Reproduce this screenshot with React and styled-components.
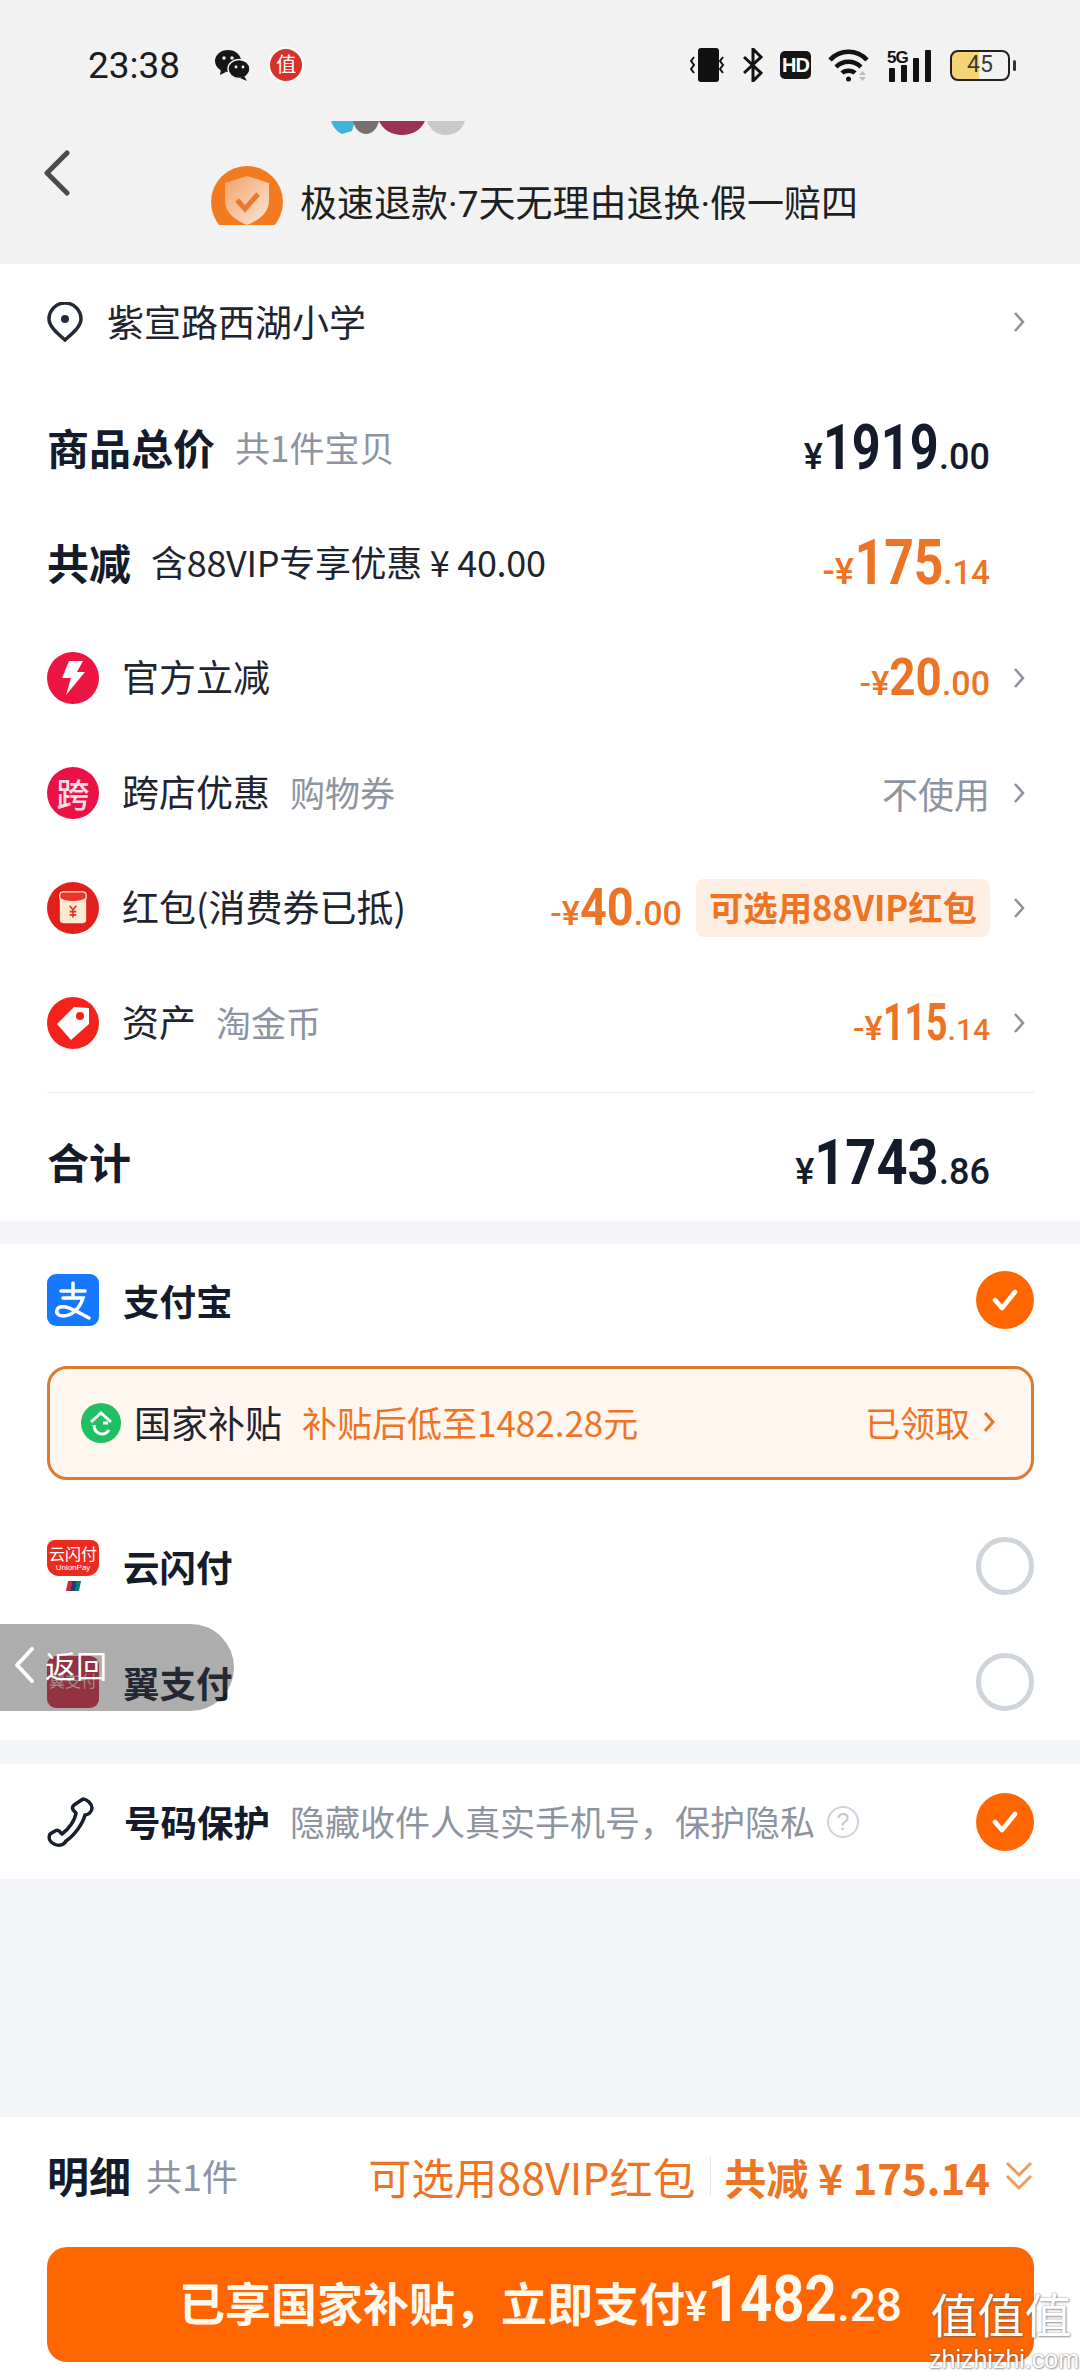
import styled, { createGlobalStyle } from "styled-components";

const cjk = `"Noto Sans CJK SC", "Noto Sans", sans-serif`;
const ink = "#141b2b";
const gray = "#8d949f";
const orange = "#ec7424";
const brand = "#ff6600";

const Global = createGlobalStyle`
  body {
    margin: 0;
    background: #f3f5f8;
    font-family: ${cjk};
    color: ${ink};
  }
`;

const Page = styled.div`
  position: relative;
  width: 1080px;
  height: 2376px;
  overflow: hidden;
  display: flex;
  flex-direction: column;
  background: #f3f5f8;
`;

const Header = styled.div`
  height: 264px;
  background: #f2f2f2;
`;

const StatusBar = styled.div`
  height: 98px;
  padding: 16px 64px 0 88px;
  display: flex;
  align-items: center;
`;

const Time = styled.span`
  font: 400 37px Roboto, sans-serif;
  color: #1c1c1c;
  margin-right: 35px;
`;

const Badge = styled.span`
  width: 32px;
  height: 32px;
  margin-left: 18px;
  border-radius: 50%;
  background: #d8302b;
  border: 2px solid #fff;
  color: #fff;
  font-size: 20px;
  line-height: 30px;
  text-align: center;
`;

const StatusIcons = styled.div`
  margin-left: auto;
  display: flex;
  align-items: center;
  gap: 17px;
`;

const HdMark = styled.span`
  width: 31px;
  height: 28px;
  border-radius: 5px;
  background: #151515;
  color: #fff;
  font: 700 20px/28px "Liberation Sans", sans-serif;
  text-align: center;
  letter-spacing: -1px;
`;

const Battery = styled.div`
  position: relative;
  width: 60px;
  height: 31px;
  box-sizing: border-box;
  border: 2.5px solid #222;
  border-radius: 8px;
  margin-right: 6px;
  background: linear-gradient(90deg, #f5d475 48%, transparent 48%);
  font: 400 23px/26px Roboto, sans-serif;
  color: #3a3a3a;
  text-align: center;
  &::after {
    content: "";
    position: absolute;
    right: -8px;
    top: 8px;
    width: 3px;
    height: 11px;
    background: #333;
    border-radius: 2px;
  }
`;

const AvatarStrip = styled.svg`
  display: block;
  margin: 7px 0 0 331px;
`;

const Nav = styled.div`
  display: flex;
  align-items: flex-start;
  padding-left: 44px;
`;

const BackIcon = styled.svg`
  flex: none;
  margin-top: 15px;
  fill: none;
  stroke: #4a4a4a;
  stroke-width: 5;
  stroke-linecap: round;
  stroke-linejoin: round;
`;

const TrustRow = styled.div`
  display: flex;
  align-items: flex-end;
  gap: 17px;
  margin: 31px 0 0 141px;
`;

const TrustText = styled.span`
  font-family: Roboto, ${cjk};
  font-size: 37px;
  line-height: 40px;
  color: #1f1f1f;
  white-space: nowrap;
`;

const Section = styled.section`
  background: #fff;
  margin-bottom: ${(p) => p.$gap || 0}px;
`;

const Row = styled.div`
  height: ${(p) => p.$h || 115}px;
  box-sizing: border-box;
  padding: ${(p) => p.$top || 0}px 55px ${(p) => p.$bottom || 0}px 47px;
  display: flex;
  align-items: center;
`;

const CheckRow = styled(Row)`
  padding-right: 46px;
`;

const Title = styled.span`
  font-size: 42px;
  font-weight: 700;
  padding-bottom: 3px;
  white-space: nowrap;
  color: ${ink};
`;

const Label = styled.span`
  font-size: 37px;
  padding-bottom: 3px;
  margin-left: ${(p) => p.$ml || 0}px;
  color: #1f2530;
  white-space: nowrap;
`;

const Sub = styled.span`
  font-size: ${(p) => p.$size || 35}px;
  padding-bottom: 3px;
  margin-left: ${(p) => p.$ml || 20}px;
  color: ${gray};
  white-space: nowrap;
`;

const Offer = styled(Label)`
  font-size: 36px;
  letter-spacing: -0.3px;
`;

const StrongLabel = styled.span`
  font-size: 36.5px;
  font-weight: 700;
  margin-left: 24px;
  color: ${ink};
  white-space: nowrap;
`;

const RoundIcon = styled.span`
  flex: none;
  width: 52px;
  height: 52px;
  margin-right: 23px;
  border-radius: 50%;
  background: ${(p) => p.$bg};
  color: #ffdce3;
  font-size: 33px;
  font-weight: 500;
  line-height: 48px;
  text-align: center;
  display: flex;
  align-items: center;
  justify-content: center;
`;

const Money = styled.div`
  margin-left: auto;
  margin-right: ${(p) => (p.$bare ? 35 : 0)}px;
  display: flex;
  align-items: baseline;
  color: ${(p) => p.$color || ink};
  font-family: Roboto, sans-serif;
  font-weight: 700;
  line-height: 1;
`;

const Small = styled.span`
  font-size: ${(p) => p.$size || 36}px;
  font-weight: 500;
`;

const Digits = styled.span`
  display: inline-block;
  font-size: ${(p) => p.$size}px;
  transform: scaleX(${(p) => p.$sx});
  transform-origin: right;
  margin-left: ${(p) => -0.5615 * p.$size * p.$n * (1 - p.$sx)}px;
`;

const Amount = ({ sign, int, dec, size = 63, sx = 0.85, small = 36, tail, color, bare }) => (
  <Money $color={color} $bare={bare}>
    <Small $size={small}>{sign}¥</Small>
    <Digits $size={size} $sx={sx} $n={int.length}>{int}</Digits>
    <Small $size={tail || small}>.{dec}</Small>
  </Money>
);

const Arrow = styled.svg`
  flex: none;
  width: 12px;
  height: 22px;
  margin-left: ${(p) => (p.$push ? "auto" : "23px")};
  fill: none;
  stroke: #8c919b;
  stroke-width: 2.5;
`;

const Chevron = ({ push }) => (
  <Arrow $push={push} viewBox="0 0 12 22">
    <path d="M2 2l8 9-8 9" />
  </Arrow>
);

const Unused = styled.span`
  margin-left: auto;
  font-size: 36px;
  color: ${gray};
`;

const Pill = styled.span`
  height: 58px;
  margin-left: 14px;
  padding: 0 13px;
  border-radius: 8px;
  background: #fdeee3;
  color: ${orange};
  font-size: 34.4px;
  font-weight: 700;
  line-height: 54px;
  white-space: nowrap;
`;

const Divider = styled.div`
  height: 1px;
  margin: 12px 46px 0 47px;
  background: #e9ebee;
`;

const Logo = styled.span`
  flex: none;
  position: relative;
  width: 52px;
  height: 52px;
  border-radius: 9px;
  background: ${(p) => p.$bg};
  color: #fff;
  text-align: center;
  overflow: hidden;
`;

const LogoName = styled.span`
  display: block;
  font-size: 16px;
  line-height: 20px;
  margin-top: ${(p) => p.$top || 3}px;
  opacity: ${(p) => p.$fade || 1};
  white-space: nowrap;
`;

const LogoSub = styled.span`
  display: block;
  font: 400 8px/9px "Liberation Sans", sans-serif;
`;

const YunLogo = styled.span`
  flex: none;
  width: 52px;
  height: 52px;
  display: flex;
  flex-direction: column;
  align-items: center;
`;

const YunCard = styled.span`
  width: 52px;
  height: 36px;
  border-radius: 8px 8px 12px 12px;
  background: #ec2a1f;
  color: #fff;
  text-align: center;
`;

const UnionFlag = styled.span`
  width: 13px;
  height: 10px;
  margin-top: 5px;
  transform: skewX(-12deg);
  background: linear-gradient(90deg, #d6243a 34%, #1d3c78 34% 67%, #0d7a7c 67%);
`;

const Check = styled.span`
  flex: none;
  margin-left: auto;
  width: 58px;
  height: 58px;
  box-sizing: border-box;
  border-radius: 50%;
  background: ${(p) => (p.$on ? brand : "#fff")};
  border: ${(p) => (p.$on ? "none" : "5px solid #cfd3da")};
  display: flex;
  align-items: center;
  justify-content: center;
`;

const Subsidy = styled.div`
  height: 114px;
  box-sizing: border-box;
  margin: 10px 46px 28px 47px;
  padding: 0 36px 0 31px;
  border: 3px solid #db7a33;
  border-radius: 20px;
  background: #fff6f0;
  display: flex;
  align-items: center;
`;

const SubsidyNote = styled.span`
  font-size: 35px;
  padding-bottom: 3px;
  margin-left: ${(p) => p.$ml || 0}px;
  color: ${orange};
  white-space: nowrap;
`;

const Claimed = styled(SubsidyNote)`
  margin-left: auto;
  display: flex;
  align-items: center;
  gap: 13px;
`;

const PhoneIcon = styled.svg`
  flex: none;
  margin-right: 5px;
  fill: none;
  stroke: #181f2c;
  stroke-width: 3.5;
  stroke-linejoin: round;
`;

const Hint = styled.span`
  flex: none;
  width: 32px;
  height: 32px;
  box-sizing: border-box;
  margin-left: 12px;
  border: 2px solid #cfd3da;
  border-radius: 50%;
  color: #c3c8d0;
  font: 400 23px/28px "Liberation Sans", sans-serif;
  text-align: center;
`;

const Filler = styled.div`
  flex: 1;
`;

const Footer = styled.footer`
  height: 259px;
  background: #fff;
`;

const FooterRow = styled.div`
  height: 118px;
  padding: 0 46px 0 47px;
  display: flex;
  align-items: center;
`;

const Promo = styled.span`
  margin-left: auto;
  font-size: 43px;
  color: ${orange};
  white-space: nowrap;
`;

const Sep = styled.span`
  width: 1px;
  height: 38px;
  margin: 0 14px;
  background: #eadfd6;
`;

const Saved = styled.span`
  font-size: 42px;
  font-weight: 700;
  color: ${orange};
  white-space: nowrap;
`;

const PayButton = styled.button`
  display: flex;
  align-items: baseline;
  justify-content: center;
  width: 987px;
  height: 115px;
  margin: 12px 0 0 47px;
  padding: 21px 0 0;
  border: none;
  border-radius: 20px;
  background: ${brand};
  color: #fff8ee;
  font-family: ${cjk};
  font-size: 46px;
  font-weight: 700;
`;

const PayAmount = styled.span`
  display: flex;
  align-items: baseline;
  font-family: Roboto, sans-serif;
  line-height: 1;
`;

const BackFloat = styled.div`
  position: absolute;
  left: 0;
  top: 1624px;
  width: 234px;
  height: 87px;
  border-radius: 0 44px 44px 0;
  background: rgba(60, 60, 60, 0.42);
  color: #fff;
  display: flex;
  align-items: center;
  padding: 0 0 6px 14px;
  box-sizing: border-box;
  font-size: 31px;
  gap: 11px;
`;

const Watermark = styled.div`
  position: absolute;
  right: 7px;
  top: 2282px;
  width: 144px;
  text-align: center;
  color: #fff;
  text-shadow: 0 0 2px rgba(90, 90, 90, 0.75), 1px 1px 2px rgba(90, 90, 90, 0.5);
`;

const WatermarkMark = styled.div`
  font-size: 47px;
  line-height: 62px;
  white-space: nowrap;
`;

const WatermarkSite = styled.div`
  font: 400 25px/26px "Liberation Sans", sans-serif;
  margin-top: 2px;
  white-space: nowrap;
`;

const CheckMark = () => (
  <svg width="28" height="24" viewBox="0 0 28 24" fill="none" stroke="#fff" strokeWidth="4.5" strokeLinecap="round" strokeLinejoin="round">
    <path d="M4 12l7 8L24 4" />
  </svg>
);

export default function App() {
  return (
    <Page>
      <Global />
      <Header>
        <StatusBar>
          <Time>23:38</Time>
          <svg width="35" height="32" viewBox="0 0 35 32" fill="#161616">
            <ellipse cx="13" cy="12" rx="13" ry="11" />
            <path d="M6 20l-1 6 6-3z" />
            <ellipse cx="24" cy="20" rx="11" ry="9.5" stroke="#f2f2f2" strokeWidth="1.5" />
            <path d="M29 27l3 5-7-3z" />
            <circle cx="9" cy="9" r="1.7" fill="#f2f2f2" />
            <circle cx="17" cy="9" r="1.7" fill="#f2f2f2" />
            <circle cx="21" cy="18" r="1.4" fill="#f2f2f2" />
            <circle cx="28" cy="18" r="1.4" fill="#f2f2f2" />
          </svg>
          <Badge>值</Badge>
          <StatusIcons>
            <svg width="36" height="34" viewBox="0 0 36 34">
              <rect x="8" y="0" width="21" height="34" rx="3" fill="#111" />
              <path d="M4 9l-3 4 3 4-3 4 3 4M33 9l-3 4 3 4-3 4 3 4" fill="none" stroke="#111" strokeWidth="2" />
            </svg>
            <svg width="20" height="34" viewBox="0 0 20 34" fill="none" stroke="#111" strokeWidth="3">
              <path d="M1 9l17 16-8 8V1l8 8L1 25" />
            </svg>
            <HdMark>HD</HdMark>
            <svg width="42" height="34" viewBox="0 0 42 34" fill="none" stroke="#111" strokeWidth="4.5">
              <path d="M2 12c10-11 27-11 37 0M8 19c7-7 18-7 25 0M14 25c3-3 10-3 13 0" />
              <circle cx="20.5" cy="31" r="2.5" fill="#111" stroke="none" />
              <path d="M31 27l3.5-4 3.500 4zM31 29h7l-3.500 4z" fill="#bbb" stroke="none" />
            </svg>
            <svg width="46" height="34" viewBox="0 0 46 34" fill="#111">
              <text x="0" y="15" fontFamily="Liberation Sans" fontWeight="700" fontSize="17" letterSpacing="-1">5G</text>
              <rect x="2" y="20" width="6" height="14" rx="1" />
              <rect x="14" y="17" width="6" height="17" rx="1" />
              <rect x="26" y="10" width="6" height="24" rx="1" />
              <rect x="38" y="2" width="6" height="32" rx="1" />
            </svg>
            <Battery>45</Battery>
          </StatusIcons>
        </StatusBar>
        <AvatarStrip width="135" height="14" viewBox="0 0 135 14">
          <path d="M0 0h24l-3 10-10 3C6 11 2 6 0 0z" fill="#3fb4d8" />
          <path d="M22 0h26c-2 8-7 13-13 13S24 8 22 0z" fill="#77706e" />
          <path d="M48 0h46c-4 9-13 14-23 14S52 9 48 0z" fill="#9c3252" />
          <path d="M96 0h38c-3 9-10 14-19 14S99 9 96 0z" fill="#c9c9c9" />
        </AvatarStrip>
        <Nav>
          <BackIcon width="26" height="46" viewBox="0 0 26 46">
            <path d="M23 3L3 23l20 20" />
          </BackIcon>
          <TrustRow>
            <svg width="72" height="59" viewBox="0 0 72 59">
              <defs>
                <linearGradient id="shieldFace" x1="0" y1="0" x2="1" y2="1">
                  <stop offset="0" stopColor="#f4a269" />
                  <stop offset="1" stopColor="#fbe6d6" />
                </linearGradient>
              </defs>
              <circle cx="36" cy="36" r="36" fill="#f27a1f" />
              <path d="M36 10l22 7v17c0 13-10 20-22 25-12-5-22-12-22-25V17z" fill="url(#shieldFace)" />
              <path d="M26 34l8 9 13-15" fill="none" stroke="#ea7a2a" strokeWidth="5" />
            </svg>
            <TrustText>极速退款·7天无理由退换·假一赔四</TrustText>
          </TrustRow>
        </Nav>
      </Header>

      <Section $gap={23}>
        <Row $h={126} $bottom={10}>
          <svg width="36" height="40" viewBox="0 0 36 40" fill="none" stroke="#232a36" strokeWidth="3.5">
            <path d="M18 38C9 30 2 24 2 17a16 16 0 0 1 32 0c0 7-7 13-16 21z" />
            <circle cx="18" cy="17" r="4" fill="#232a36" stroke="none" />
          </svg>
          <Label $ml={24}>紫宣路西湖小学</Label>
          <Chevron push />
        </Row>
        <Row>
          <Title>商品总价</Title>
          <Sub>共1件宝贝</Sub>
          <Amount int="1919" dec="00" sx={0.8} bare />
        </Row>
        <Row>
          <Title>共减</Title>
          <Offer $ml={20}>含88VIP专享优惠 ¥ 40.00</Offer>
          <Amount sign="-" int="175" dec="14" sx={0.82} tail={33} color={orange} bare />
        </Row>
        <Row>
          <RoundIcon $bg="#ec1440">
            <svg width="26" height="36" viewBox="0 0 26 36" fill="#fff">
              <path d="M9 1h14l-6 11h8L6 35l5-17H2z" />
            </svg>
          </RoundIcon>
          <Label>官方立减</Label>
          <Amount sign="-" int="20" dec="00" size={52} small={34} sx={0.88} color={orange} />
          <Chevron />
        </Row>
        <Row>
          <RoundIcon $bg="#ea1244">跨</RoundIcon>
          <Label>跨店优惠</Label>
          <Sub>购物券</Sub>
          <Unused>不使用</Unused>
          <Chevron />
        </Row>
        <Row>
          <RoundIcon $bg="#e2201b">
            <svg width="28" height="33" viewBox="0 0 34 40">
              <rect x="1" y="1" width="32" height="38" rx="4" fill="#fbe9d0" />
              <path d="M1 5a4 4 0 0 1 4-4h24a4 4 0 0 1 4 4v4c-8 5-24 5-32 0z" fill="#e8352a" stroke="#fbe9d0" strokeWidth="1.5" />
              <path d="M13 18l4 5 4-5M17 23v9M13 25h8M13 29h8" fill="none" stroke="#d8352a" strokeWidth="2" />
            </svg>
          </RoundIcon>
          <Label>红包(消费券已抵)</Label>
          <Amount sign="-" int="40" dec="00" size={52} small={34} sx={0.9} color={orange} />
          <Pill>可选用88VIP红包</Pill>
          <Chevron />
        </Row>
        <Row>
          <RoundIcon $bg="#f5211b">
            <svg width="38" height="38" viewBox="0 0 38 38">
              <path d="M35 4v16L17 36 3 20 20 3z" fill="#fff" strokeLinejoin="round" />
              <circle cx="26" cy="12" r="4" fill="#f5211b" />
            </svg>
          </RoundIcon>
          <Label>资产</Label>
          <Sub>淘金币</Sub>
          <Amount sign="-" int="115" dec="14" size={52} small={34} tail={30} sx={0.72} color={orange} />
          <Chevron />
        </Row>
        <Divider />
        <Row $h={128} $top={10}>
          <Title>合计</Title>
          <Amount int="1743" dec="86" sx={0.86} bare />
        </Row>
      </Section>

      <Section $gap={24}>
        <CheckRow $h={112}>
          <Logo $bg="#1677ff">
            <svg width="52" height="52" viewBox="0 0 52 52" fill="none" stroke="#fff" strokeWidth="3.5" strokeLinecap="round">
              <path d="M14 17h24M26 9v15M16 24h20c-3 10-11 18-20 18-5 0-7-3-6-6 1-4 7-4 12-2 6 2 12 6 20 10" />
            </svg>
          </Logo>
          <StrongLabel>支付宝</StrongLabel>
          <Check $on><CheckMark /></Check>
        </CheckRow>
        <Subsidy>
          <svg width="40" height="40" viewBox="0 0 40 40" style={{ flex: "none", marginRight: 13 }}>
            <circle cx="20" cy="20" r="20" fill="#1fbf62" />
            <path d="M10 19l10-9 10 9M13 22c0 6 4 9 8 9 3 0 5-1 7-4M27 20l-5 0" fill="none" stroke="#fff" strokeWidth="3" />
          </svg>
          <Label>国家补贴</Label>
          <SubsidyNote $ml={20}>补贴后低至1482.28元</SubsidyNote>
          <Claimed>
            已领取
            <svg width="12" height="24" viewBox="0 0 12 24" fill="none" stroke={orange} strokeWidth="3">
              <path d="M2 3l8 9-8 9" />
            </svg>
          </Claimed>
        </Subsidy>
        <CheckRow $h={116}>
          <YunLogo>
            <YunCard>
              <LogoName>云闪付</LogoName>
              <LogoSub>UnionPay</LogoSub>
            </YunCard>
            <UnionFlag />
          </YunLogo>
          <StrongLabel>云闪付</StrongLabel>
          <Check />
        </CheckRow>
        <CheckRow $h={116}>
          <Logo $bg="#d32c45">
            <LogoName $top={14} $fade={0.7}>翼支付</LogoName>
          </Logo>
          <StrongLabel>翼支付</StrongLabel>
          <Check />
        </CheckRow>
      </Section>

      <Section>
        <CheckRow>
          <PhoneIcon width="48" height="52" viewBox="0 0 48 52">
            <path d="M36 3c4 0 9 5 9 9 0 4-4 7-7 7-2 8-10 20-19 26-3 5-8 5-12 3-4-2-6-6-4-10l5-3c2-1 4-1 5 1l2 2c7-5 13-14 14-21l-2-2c-2-2-2-4 0-6z" />
          </PhoneIcon>
          <StrongLabel>号码保护</StrongLabel>
          <Sub>隐藏收件人真实手机号，保护隐私</Sub>
          <Hint>?</Hint>
          <Check $on><CheckMark /></Check>
        </CheckRow>
      </Section>

      <Filler />

      <Footer>
        <FooterRow>
          <Title>明细</Title>
          <Sub $ml={15} $size={36}>共1件</Sub>
          <Promo>可选用88VIP红包</Promo>
          <Sep />
          <Saved>共减 ¥ 175.14</Saved>
          <svg width="30" height="32" viewBox="0 0 30 32" fill="none" stroke="#ee9a62" strokeWidth="3" style={{ marginLeft: 14, flex: "none" }}>
            <path d="M3 3l12 12L27 3M3 16l12 12 12-12" />
          </svg>
        </FooterRow>
        <PayButton>
          已享国家补贴，立即支付
          <PayAmount>
            <Small $size={42}>¥</Small>
            <Digits $size={64} $sx={0.88} $n={4}>1482</Digits>
            <Small $size={46}>.28</Small>
          </PayAmount>
        </PayButton>
      </Footer>

      <BackFloat>
        <svg width="20" height="36" viewBox="0 0 20 36" fill="none" stroke="#fff" strokeWidth="4" strokeLinecap="round" strokeLinejoin="round">
          <path d="M18 2L3 18l15 16" />
        </svg>
        返回
      </BackFloat>

      <Watermark>
        <WatermarkMark>值值值</WatermarkMark>
        <WatermarkSite>zhizhizhi.com</WatermarkSite>
      </Watermark>
    </Page>
  );
}
